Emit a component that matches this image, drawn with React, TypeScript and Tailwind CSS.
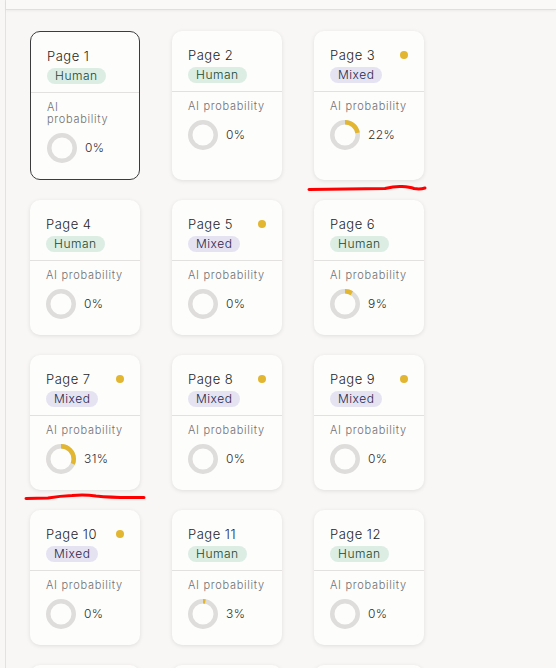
import React from 'react';

type Page = { n: number; kind: 'Human' | 'Mixed'; ai: number; flag?: boolean };

const PAGES: Page[] = [
  { n: 1, kind: 'Human', ai: 0 },
  { n: 2, kind: 'Human', ai: 0 },
  { n: 3, kind: 'Mixed', ai: 22, flag: true },
  { n: 4, kind: 'Human', ai: 0 },
  { n: 5, kind: 'Mixed', ai: 0, flag: true },
  { n: 6, kind: 'Human', ai: 9 },
  { n: 7, kind: 'Mixed', ai: 31, flag: true },
  { n: 8, kind: 'Mixed', ai: 0, flag: true },
  { n: 9, kind: 'Mixed', ai: 0, flag: true },
  { n: 10, kind: 'Mixed', ai: 0, flag: true },
  { n: 11, kind: 'Human', ai: 3 },
  { n: 12, kind: 'Human', ai: 0 },
  { n: 13, kind: 'Human', ai: 0 },
  { n: 14, kind: 'Human', ai: 0 },
  { n: 15, kind: 'Human', ai: 0 },
];

const Donut = ({ value }: { value: number }) => {
  const r = 12.75;
  const c = 2 * Math.PI * r;
  return (
    <svg width="30" height="30" viewBox="0 0 30 30" className="shrink-0">
      <circle cx="15" cy="15" r={r} fill="none" stroke="#dedddc" strokeWidth="4.5" />
      {value > 0 && (
        <circle
          cx="15"
          cy="15"
          r={r}
          fill="none"
          stroke="#e3b631"
          strokeWidth="4.5"
          strokeDasharray={`${(c * value) / 100} ${c}`}
          transform="rotate(-90 15 15)"
        />
      )}
    </svg>
  );
};

const PageCard = ({ page, selected }: { page: Page; selected?: boolean }) => (
  <div
    className={`flex flex-col rounded-[10px] bg-[#fdfdfc] ${
      selected ? 'border border-[#3c3c3c]' : 'shadow-[0_1px_4px_rgba(0,0,0,0.10)]'
    }`}
  >
    <div className="px-4 pt-4 pb-2 border-b border-[#e2e1df]">
      <div className="flex items-center justify-between">
        <span className="text-[13px] leading-4 tracking-[0.5px] text-[#262626]">Page {page.n}</span>
        {page.flag && <span className="w-2 h-2 rounded-full bg-[#e3b631]" />}
      </div>
      <div className="mt-1 flex">
        <span
          className={`h-4 px-2 rounded-full text-[12px] leading-4 tracking-[0.5px] ${
            page.kind === 'Human' ? 'bg-[#dcede4] text-[#1a4630]' : 'bg-[#e5e3f2] text-[#29264d]'
          }`}
        >
          {page.kind}
        </span>
      </div>
    </div>
    <div className="px-4 pt-2 pb-4">
      <p className="text-[11px] leading-[12px] tracking-[0.7px] text-[#707070]">AI probability</p>
      <div className="mt-2 flex items-center gap-2">
        <Donut value={page.ai} />
        <span className="text-[12px] tracking-[0.4px] text-[#2e2e2e]">{page.ai}%</span>
      </div>
    </div>
  </div>
);

export default function App() {
  return (
    <div
      className="relative h-[668px] overflow-hidden bg-[#f8f7f5] flex font-light"
      style={{ fontFamily: 'Inter, "Noto Sans", sans-serif' }}
    >
      <div className="w-[6px] shrink-0 border-r border-[#e3e2e0] bg-[#f8f7f5]" />
      <div className="flex-1 flex flex-col">
        <div className="h-[10px] shrink-0 bg-[#faf9f8] border-b border-[#e0dfdd] shadow-[0_1px_3px_rgba(0,0,0,0.05)]" />
        <div className="pl-6 pt-[21px]">
          <div className="grid grid-cols-[repeat(3,110px)] gap-x-8 gap-y-5">
            {PAGES.map((p) => (
              <PageCard key={p.n} page={p} selected={p.n === 1} />
            ))}
          </div>
        </div>
      </div>

      {/* hand-drawn marks */}
      <svg className="absolute left-0 top-0 pointer-events-none" width="556" height="668">
        <path
          d="M309 189.5 L385 188.5 Q395 186 402 186.5 Q410 187 414 188.5 Q420 189.5 425 188"
          fill="none"
          stroke="#ff0000"
          strokeWidth="3"
          strokeLinecap="round"
        />
        <path
          d="M26 498.5 L48 498 Q60 496 72 495.5 Q85 494.5 96 496 Q110 497.5 130 497.5 L144 497.5"
          fill="none"
          stroke="#ff0000"
          strokeWidth="3"
          strokeLinecap="round"
        />
      </svg>
    </div>
  );
}
